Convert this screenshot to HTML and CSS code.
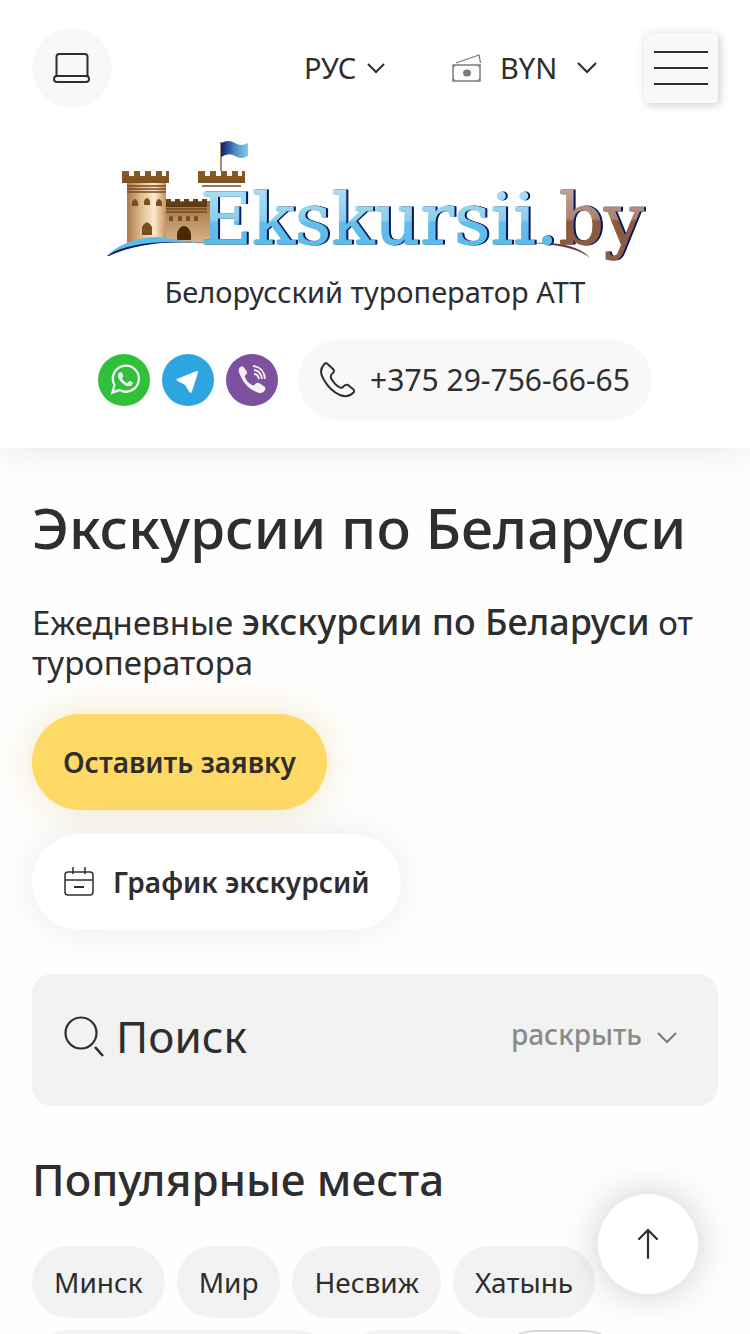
FILE: index.html
```html
<!DOCTYPE html>
<html lang="ru">
<head>
  <meta charset="UTF-8" />
  <meta name="viewport" content="width=device-width, initial-scale=1" />
  <title>Экскурсии по Беларуси</title>
  <link rel="stylesheet" href="styles.css">
</head>
<body>
  <header class="header">
    <div class="topbar">
      <a class="account" href="#" aria-label="Личный кабинет">
        <svg width="38" height="32" viewBox="0 0 38 32" fill="none" stroke="#2e2e2e" stroke-width="2">
          <path d="M3.500 24V5q0-3 3-3h25q3 0 3 3v19" />
          <rect x="1" y="24" width="35" height="6" rx="3" />
        </svg>
      </a>
      <div class="lang">
        <select class="lang-select" aria-label="Язык">
          <option>РУС</option>
          <option>ENG</option>
        </select>
        <svg width="20" height="12" viewBox="0 0 20 12" fill="none" stroke="#2e2e2e" stroke-width="2"><path d="M2 2l8 8 8-8" /></svg>
      </div>
      <div class="currency">
        <svg width="30" height="28" viewBox="0 0 30 28" fill="none" stroke="#7b7b7b">
          <path d="M4 9L27 1l1.500 8" stroke-width="1.300" />
          <rect x="1" y="11" width="27" height="16" stroke-width="1.500" />
          <path d="M1 13q2 0 2-2M28 13q-2 0-2-2M1 25q2 0 2 2M28 25q-2 0-2 2" />
          <ellipse cx="15" cy="19" rx="4" ry="3.500" fill="#7b7b7b" stroke="none" />
        </svg>
        <select class="currency-select" aria-label="Валюта">
          <option>BYN</option>
          <option>USD</option>
        </select>
        <svg width="22" height="14" viewBox="0 0 22 14" fill="none" stroke="#2e2e2e" stroke-width="2.200"><path d="M2 2l9 9 9-9" /></svg>
      </div>
      <button class="burger" type="button" aria-label="Меню"><span></span><span></span><span></span></button>
    </div>

    <a class="logo" href="#" aria-label="Ekskursii.by">
      <svg viewBox="104 140 542 124">
        <defs>
          <linearGradient id="tower"><stop offset="0" stop-color="#a97a4b" /><stop offset=".35" stop-color="#dfb98c" /><stop offset=".7" stop-color="#fdeacd" /><stop offset="1" stop-color="#c4935f" /></linearGradient>
          <linearGradient id="wall" x2="0" y2="1"><stop offset="0" stop-color="#a06f3e" /><stop offset="1" stop-color="#d9b58b" /></linearGradient>
          <linearGradient id="roof" x2="0" y2="1"><stop offset="0" stop-color="#8b5d24" /><stop offset="1" stop-color="#5f3a10" /></linearGradient>
          <linearGradient id="flag"><stop offset="0" stop-color="#0b1f6b" /><stop offset=".6" stop-color="#5797d0" /><stop offset="1" stop-color="#7ccbf0" /></linearGradient>
          <linearGradient id="blue" gradientUnits="userSpaceOnUse" x1="0" y1="186" x2="0" y2="245"><stop offset="0" stop-color="#b0dff5" /><stop offset=".58" stop-color="#8bcdec" /><stop offset=".62" stop-color="#62bdea" /><stop offset="1" stop-color="#5cbbe9" /></linearGradient>
          <linearGradient id="brown" gradientUnits="userSpaceOnUse" x1="0" y1="186" x2="0" y2="260"><stop offset="0" stop-color="#c2a699" /><stop offset=".44" stop-color="#aa8270" /><stop offset=".48" stop-color="#8b593f" /><stop offset="1" stop-color="#8d5d43" /></linearGradient>
        </defs>
        <!-- castle -->
        <path fill="url(#tower)" d="M127 182h39v61h-39z" />
        <path fill="url(#wall)" d="M166 201h44v42h-44z" />
        <path fill="url(#roof)" d="M122 171h7v5h5v-5h6v5h5v-5h6v5h5v-5h6v5h4v-5h3v12h-47zM198 171h7v5h5v-5h6v5h5v-5h6v5h5v-5h6v5h4v-5h3v12h-47zM166 199h5v3h4v-3h5v3h4v-3h5v3h4v-3h5v3h4v-3h5v8h-41z" />
        <path stroke="#73491f" stroke-width="1.500" d="M127 186h39M127 189h39M127 192h39M202 186h39M166 209h41M166 212h41" />
        <path fill="#76501f" d="M132 206v-4q3-6 6 0v4zM144 205v-4q3-6 6 0v4zM156 206v-4q3-6 6 0v4zM142 235v-8q5-9 10 0v8zM169 221v-4q2-3 4 0v4zM178 221v-4q2-3 4 0v4zM186 221v-4q2-3 4 0v4zM194 221v-4q2-3 4 0v4z" />
        <path fill="#4b2904" d="M177 240v-6q2-8 7-8t7 8v6z" />
        <path stroke="#98633a" stroke-width="1.500" d="M221 142v29" />
        <path fill="url(#flag)" d="M221 143q8-4 14 0t13 0v13q-7 4-13 0t-14 1z" />
        <path fill="#071b65" d="M107 256q25-18 61-16l38 3q-62-4-97 13z" />
        <path fill="#5bbbe9" d="M107 255q22-18 50-18l50 7q-67-7-100 11z" />
        <path fill="#6b3a31" d="M530 243q46-2 60 15-15-13-60-15z" />
        <text class="logo-text" x="200" y="244" fill="url(#blue)" stroke="url(#blue)">Ekskursii.<tspan fill="url(#brown)" stroke="url(#brown)">by</tspan></text>
      </svg>
    </a>
    <p class="tagline">Белорусский туроператор АТТ</p>

    <div class="contacts">
      <a class="messenger whatsapp" href="#" aria-label="WhatsApp">
        <svg viewBox="0 0 52 52">
          <path d="M14.500 38.500l2-7.500a13 13 0 1 1 5 5z" fill="none" stroke="#f1f1f1" stroke-width="2.400" />
          <path d="M21 19c2-2 3-1 4 2 1 2-1 2-1 3 1 3 3 4 5 5 1 0 2-2 3-2 3 1 4 2 2 4-3 3-8 0-11-3-3-4-4-7-2-9z" fill="#f1f1f1" />
        </svg>
      </a>
      <a class="messenger telegram" href="#" aria-label="Telegram">
        <svg viewBox="0 0 52 52"><path d="M15 25l19.500-8q2-.5 1.500 1.500l-6 19q-1.500 2.500-3 0L23 31l-7.500-4q-2-1-.5-2z" fill="#fff" /></svg>
      </a>
      <a class="messenger viber" href="#" aria-label="Viber">
        <svg viewBox="0 0 52 52">
          <path d="M16 12c-4 2-4 4-2 9 4 9 10 15 19 18 3 1 8-3 6-6l-6-4c-4-1-4 4-7 2-4-2-6-5-7-8-1-2 3-3 2-5-2-3-3-5-5-6z" fill="#f1f1f1" />
          <path d="M27 12q11 1 12 13M28 16q7 1 8 9M28 20q4 0 5 5" fill="none" stroke="#f1f1f1" stroke-width="1.800" />
        </svg>
      </a>
      <a class="phone" href="tel:+375297566665">
        <svg width="36" height="36" viewBox="0 0 36 36" fill="none" stroke="#2e2e2e" stroke-width="2" stroke-linejoin="round"><path d="M7 1.500q-1.500-1-3 1C0 7 0 12 4 18c4 7 9 12 16 15 5 2 9 2 13-2q2-1.500.5-3.500L28 23q-2-1-4 1-2 3-5 1-5-3-8-9-1-3 2-5 1.500-1.500.5-3.500z" /></svg>
        <span>+375 29-756-66-65</span>
      </a>
    </div>
  </header>

  <main class="content">
    <h1>Экскурсии по Беларуси</h1>
    <p class="intro">Ежедневные <strong>экскурсии по Беларуси</strong> от туроператора</p>

    <div class="actions">
      <button class="btn btn-order" type="button">Оставить заявку</button>
      <a class="btn btn-schedule" href="#">
        <svg width="32" height="32" viewBox="0 0 32 32" fill="none" stroke="#2e2e2e" stroke-width="1.500">
          <rect x="2" y="6" width="28" height="23" rx="3" />
          <path d="M2 14h28M10 1v7M22 1v7" /><path d="M11 21h10" stroke-width="2" />
        </svg>
        <span>График экскурсий</span>
      </a>
    </div>

    <section class="search">
      <h2 class="search-title">
        <svg width="40" height="42" viewBox="0 0 40 42" fill="none" stroke="#2e2e2e" stroke-width="2.200"><circle cx="17" cy="18" r="15.500" /><path d="M31 32l8 9" stroke-width="2.600" /></svg>
        Поиск
      </h2>
      <button class="search-toggle" type="button">раскрыть
        <svg width="22" height="14" viewBox="0 0 22 14" fill="none" stroke="#777" stroke-width="2"><path d="M2 2l9 9 9-9" /></svg>
      </button>
    </section>

    <h2 class="places-title">Популярные места</h2>
    <nav class="places">
      <a class="place" href="#">Минск</a>
      <a class="place" href="#">Мир</a>
      <a class="place" href="#">Несвиж</a>
      <a class="place" href="#">Хатынь</a>
      <a class="place" href="#">Беловежская пуща</a>
      <a class="place" href="#">Гродно</a>
      <button class="place place-more" type="button">Ещё</button>
    </nav>
  </main>

  <a class="to-top" href="#" aria-label="Наверх">
    <svg width="22" height="32" viewBox="0 0 22 32" fill="none" stroke="#2e2e2e" stroke-width="2.200" stroke-linecap="round" stroke-linejoin="round"><path d="M11 30V2M2 11l9-9 9 9" /></svg>
  </a>
</body>
</html>
```
FILE: styles.css
```css
* {
  box-sizing: border-box;
}
body {
  margin: 0;
  background: #fefefe;
  color: #2e2e2e;
  font-family: "Noto Sans", sans-serif;
  font-size: 28px;
  line-height: 40px;
}
a {
  color: inherit;
  text-decoration: none;
}
svg {
  display: block;
  flex-shrink: 0;
}
button,
select {
  border: none;
  background: none;
  padding: 0;
  color: inherit;
  font: inherit;
  cursor: pointer;
}
select {
  appearance: none;
}
.header {
  padding: 28px 32px;
  background: #fff;
  box-shadow: 0 0 40px rgba(0, 0, 0, 0.1);
}
.topbar {
  display: flex;
  align-items: center;
}
.account {
  display: flex;
  align-items: center;
  justify-content: center;
  width: 80px;
  height: 80px;
  border-radius: 50%;
  background: #f8f8f8;
}
.lang,
.currency {
  display: flex;
  align-items: center;
  font-size: 29px;
}
.lang {
  gap: 4px;
  margin-left: auto;
}
.lang-select {
  width: 58px;
}
.currency {
  gap: 18px;
  margin: 0 46px 0 66px;
}
.currency-select {
  width: 58px;
}
.burger {
  display: flex;
  flex-direction: column;
  justify-content: center;
  gap: 14px;
  width: 74px;
  height: 70px;
  padding: 0 10px;
  border-radius: 4px;
  background: #f8f8f8;
  box-shadow: 2px 2px 10px rgba(0, 0, 0, 0.2);
}
.burger span {
  height: 2px;
  background: #2e2e2e;
}
.logo {
  display: block;
  max-width: 542px;
  margin: 32px auto 0;
}
.logo-text {
  font: 71px "DejaVu Serif", serif;
  stroke-width: 1px;
  filter: drop-shadow(2px 0 0 #001560);
}
.tagline {
  margin: 8px 0 28px;
  font-size: 29px;
  text-align: center;
}
.contacts {
  display: flex;
  align-items: center;
  justify-content: center;
  gap: 12px;
}
.messenger {
  width: 52px;
  height: 52px;
  border-radius: 50%;
}
.whatsapp {
  background: #30c039;
}
.telegram {
  background: #2ca5e0;
}
.viber {
  background: #7d519f;
}
.phone {
  display: flex;
  align-items: center;
  gap: 14px;
  height: 80px;
  margin-left: 8px;
  padding: 0 22px;
  border-radius: 40px;
  background: #f8f8f8;
  font-size: 30px;
}
.content {
  padding: 44px 32px;
}
h1 {
  margin: 0 0 40px;
  font-size: 57px;
  font-weight: 500;
  line-height: 70px;
}
.intro {
  margin: 0 0 31px;
  font-size: 33px;
}
.intro strong {
  font-size: 36px;
  font-weight: 500;
}
.actions {
  display: flex;
  flex-direction: column;
  align-items: flex-start;
  gap: 24px;
  margin-bottom: 44px;
}
.btn {
  display: flex;
  align-items: center;
  gap: 18px;
  height: 96px;
  padding: 0 31px;
  border-radius: 48px;
  font-weight: 600;
}
.btn-order {
  background: #ffd966;
  box-shadow: 0 0 40px rgba(217, 184, 87, 0.35);
}
.btn-schedule {
  background: #fff;
  box-shadow: 0 0 40px rgba(0, 0, 0, 0.08);
}
.search {
  display: flex;
  align-items: center;
  justify-content: space-between;
  height: 132px;
  padding: 0 40px 8px 32px;
  border-radius: 20px;
  background: #f2f2f2;
}
.search-title {
  display: flex;
  align-items: center;
  gap: 12px;
  margin: 0;
  font-size: 44px;
  font-weight: 400;
}
.search-toggle {
  display: flex;
  align-items: center;
  gap: 14px;
  padding-bottom: 4px;
  color: #8b8b8b;
  font-weight: 500;
}
.search-toggle svg {
  margin-top: 8px;
}
.places-title {
  margin: 44px 0 38px;
  font-size: 44px;
  font-weight: 500;
  line-height: 58px;
}
.places {
  display: flex;
  flex-wrap: wrap;
  gap: 12px;
}
.place {
  padding: 16px 22px;
  border-radius: 36px;
  background: #f2f2f2;
}
.place-more {
  padding: 14px 32px;
  border: 2px solid #d6d6d6;
  background: #fff;
}
.to-top {
  position: fixed;
  right: 52px;
  bottom: 40px;
  display: flex;
  align-items: center;
  justify-content: center;
  width: 100px;
  height: 100px;
  border-radius: 50%;
  background: #fff;
  box-shadow: 0 0 40px rgba(0, 0, 0, 0.2);
}
```
